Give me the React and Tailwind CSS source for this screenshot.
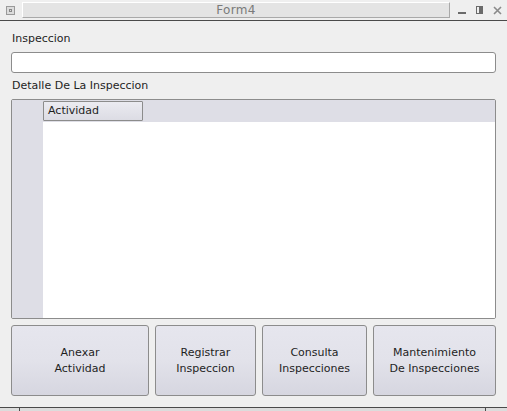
import React from 'react';

const buttons = [
  { label: ['Anexar', 'Actividad'], w: 'w-[138px]' },
  { label: ['Registrar', 'Inspeccion'], w: 'w-[101px]' },
  { label: ['Consulta', 'Inspecciones'], w: 'w-[105px]' },
  { label: ['Mantenimiento', 'De Inspecciones'], w: 'w-[123px]' },
];

function TitleBar() {
  return (
    <div className="h-[21px] flex items-center border-b border-[#4a4a4a] bg-[#efefef] shrink-0">
      {/* window menu icon */}
      <div className="ml-[6px] w-[9px] h-[9px] border border-[#9a9a9a] bg-[#dcdcdc] flex items-center justify-center">
        <div className="w-[3px] h-[3px] border border-[#888]" />
      </div>
      <div className="ml-[7px] w-[428px] h-[16px] bg-[#e4e4e4] border-t border-l border-t-white border-l-white border-b border-r border-b-[#a9a9a9] border-r-[#a9a9a9] flex items-center justify-center text-[12px] text-[#7a7a7a] tracking-[0.3px]">
        Form4
      </div>
      <div className="ml-[8px] flex items-center gap-[9px]">
        {/* minimize */}
        <svg width="9" height="9" viewBox="0 0 9 9">
          <rect x="0" y="6" width="8" height="2" fill="#6a6a6a" />
        </svg>
        {/* maximize */}
        <svg width="8" height="9" viewBox="0 0 8 9">
          <rect x="0.5" y="0.5" width="6" height="7" fill="none" stroke="#6a6a6a" />
          <rect x="3" y="1" width="3" height="6" fill="#6a6a6a" />
        </svg>
        {/* close */}
        <svg width="9" height="9" viewBox="0 0 9 9">
          <path d="M1 1 L8 8 M8 1 L1 8" stroke="#8a8a8a" strokeWidth="1.6" />
        </svg>
      </div>
    </div>
  );
}

export default function App() {
  return (
    <div
      className="w-[507px] h-[411px] bg-[#efefef] flex flex-col overflow-hidden text-[#1e1e1e]"
      style={{ fontFamily: '"DejaVu Sans", Verdana, sans-serif' }}
    >
      <TitleBar />

      <div className="px-[11px] flex flex-col flex-1">
        <div className="mt-[11px] h-[14px] leading-[14px] text-[11px] ml-[1px]">Inspeccion</div>
        <input
          type="text"
          className="mt-[6px] h-[21px] w-full bg-white border border-[#8c8c8c] rounded-[3px] outline-none px-1 text-[11px]"
        />

        <div className="mt-[6px] h-[14px] leading-[14px] text-[11px] ml-[1px]">Detalle De La Inspeccion</div>

        {/* table */}
        <div className="mt-[6px] h-[220px] border border-[#8c8c8c] rounded-[2px] bg-white flex overflow-hidden">
          <div className="w-[31px] bg-[#dedee6] shrink-0" />
          <div className="flex-1 flex flex-col">
            <div className="h-[22px] bg-[#dedee6] flex items-start pt-[1px]">
              <div className="w-[100px] h-[20px] border border-[#8c8c8c] rounded-[1px] bg-gradient-to-b from-[#ebebf1] to-[#dcdce4] text-[11px] leading-[18px] pl-[4px]">
                Actividad
              </div>
            </div>
            <div className="flex-1 bg-white" />
          </div>
        </div>

        {/* buttons */}
        <div className="mt-[6px] flex gap-[6px]">
          {buttons.map((b) => (
            <button
              key={b.label[1]}
              className={`${b.w} h-[71px] border border-[#8c8c8c] rounded-[3px] bg-gradient-to-b from-[#e6e6ee] via-[#e2e2ea] to-[#d6d6e0] text-[11px] leading-[16px] flex flex-col items-center justify-center text-[#1e1e1e]`}
            >
              <span>{b.label[0]}</span>
              <span>{b.label[1]}</span>
            </button>
          ))}
        </div>
        <div className="flex-1" />
      </div>

      {/* bottom edge of the next window */}
      <div className="h-[4px] border-t border-[#4a4a4a] flex shrink-0">
        <div className="w-[20px] bg-[#dcdcdc] border-r border-[#4a4a4a]" />
        <div className="w-[466px] bg-[#dcdcdc] border-r border-[#4a4a4a]" />
        <div className="flex-1 bg-[#dcdcdc]" />
      </div>
    </div>
  );
}
